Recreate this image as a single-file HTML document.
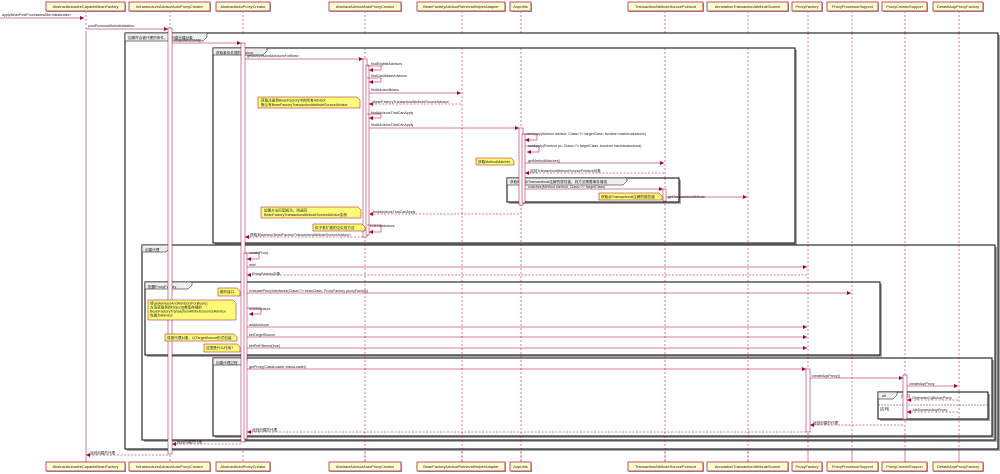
<!DOCTYPE html>
<html><head><meta charset="utf-8"><style>
html,body{margin:0;padding:0;background:#fff;width:1000px;height:474px;overflow:hidden}
svg{display:block}
text{font-family:"Liberation Sans","Noto Sans CJK SC",sans-serif;font-size:3.6px;fill:#222}
.pt text{font-size:3.9px}
.ll{stroke:#A80036;stroke-width:.5;stroke-dasharray:2,2}
.pb{fill:#FEFECE;stroke:#A80036;stroke-width:.7}
.m{stroke:#A80036;stroke-width:.5;fill:none}
.r{stroke:#A80036;stroke-width:.5;fill:none;stroke-dasharray:2,1.5}
.fl{fill:#eee;stroke:#000;stroke-width:.5}
.nt{fill:#FBFB77;stroke:#A80036;stroke-width:.5}
.act{fill:#fff;stroke:#A80036;stroke-width:.5}
.sh{fill:#aaa}
</style></head><body>
<svg width="1000" height="474" viewBox="0 0 1000 474" xmlns="http://www.w3.org/2000/svg">
<defs><marker id="a" markerWidth="4" markerHeight="4" refX="4" refY="2" orient="auto" markerUnits="userSpaceOnUse"><path d="M0,0 L4,2 L0,4 Z" fill="#A80036"/></marker></defs>
<g class="ll">
<line x1="86" y1="11" x2="86" y2="462"/><line x1="170" y1="11" x2="170" y2="462"/><line x1="243" y1="11" x2="243" y2="462"/><line x1="365" y1="11" x2="365" y2="462"/><line x1="462" y1="11" x2="462" y2="462"/><line x1="521" y1="11" x2="521" y2="462"/><line x1="665" y1="11" x2="665" y2="462"/><line x1="748" y1="11" x2="748" y2="462"/><line x1="808" y1="11" x2="808" y2="462"/><line x1="852" y1="11" x2="852" y2="462"/><line x1="905" y1="11" x2="905" y2="462"/><line x1="959" y1="11" x2="959" y2="462"/>
</g>
<rect x="127" y="35" width="873" height="416" class="sh"/>
<rect x="125" y="33" width="873" height="416" fill="#fff" stroke="#000" stroke-width="1"/>
<path d="M125,33 H207 V37 L203,41 H125 Z" class="fl"/><text x="128" y="39">如果符合被代理的条件，则创建代理对象</text>
<rect x="215" y="50" width="582" height="195" class="sh"/>
<rect x="213" y="48" width="582" height="195" fill="#fff" stroke="#000"/>
<path d="M213,48 H267 V51 L263,55 H213 Z" class="fl"/><text x="216" y="54">获取事务处理的Advisor</text>
<rect x="144" y="247" width="853" height="195" class="sh"/>
<rect x="142" y="245" width="853" height="195" fill="#fff" stroke="#000"/>
<path d="M142,245 H170 V248 L166,252 H142 Z" class="fl"/><text x="145" y="251">创建代理</text>
<rect x="147" y="284" width="735" height="73" class="sh"/>
<rect x="145" y="282" width="735" height="73" fill="#fff" stroke="#000"/>
<path d="M145,282 H192 V285 L188,289 H145 Z" class="fl"/><text x="148" y="288">配置ProxyFactory</text>
<rect x="215" y="360" width="779" height="78" class="sh"/>
<rect x="213" y="358" width="779" height="78" fill="#fff" stroke="#000"/>
<path d="M213,358 H247 V361 L243,365 H213 Z" class="fl"/><text x="216" y="364">创建代理过程</text>
<g class="ll">
<line x1="86" y1="33" x2="86" y2="462"/><line x1="365" y1="48" x2="365" y2="462"/><line x1="462" y1="48" x2="462" y2="462"/><line x1="521" y1="48" x2="521" y2="462"/><line x1="665" y1="48" x2="665" y2="462"/><line x1="748" y1="48" x2="748" y2="462"/><line x1="808" y1="33" x2="808" y2="462"/><line x1="852" y1="33" x2="852" y2="462"/><line x1="905" y1="33" x2="905" y2="462"/><line x1="959" y1="33" x2="959" y2="462"/>
</g>
<rect x="509" y="180" width="172" height="24" class="sh"/>
<rect x="507" y="178" width="172" height="24" fill="#fff" stroke="#000"/>
<path d="M507,178 H627 V181 L623,185 H507 Z" class="fl"/><text x="510" y="183">获取标注@Transactional注解的属性值，则方法需要事务增强</text>
<line x1="521" y1="178" x2="521" y2="202" class="ll"/><line x1="665" y1="178" x2="665" y2="202" class="ll"/>
<rect x="880" y="394" width="110" height="27" class="sh"/>
<rect x="878" y="392" width="110" height="27" fill="#fff" stroke="#000"/>
<path d="M878,392 H897 V395 L893,399 H878 Z" class="fl"/><text x="882" y="397">alt</text><text x="901" y="397">[条件]</text>
<line x1="878" y1="405" x2="988" y2="405" stroke="#000" stroke-width=".4" stroke-dasharray="2,1"/><text x="880" y="410">[否则]</text>
<line x1="959" y1="392" x2="959" y2="419" class="ll"/>
<rect x="168" y="28" width="4" height="426" class="act"/>
<rect x="241" y="43" width="4" height="399" class="act"/>
<rect x="244" y="253" width="3" height="186" class="act"/>
<rect x="363" y="59" width="4" height="178" class="act"/>
<rect x="366" y="65" width="3" height="170" class="act"/>
<rect x="519" y="128" width="4" height="77" class="act"/>
<rect x="522" y="134" width="3" height="69" class="act"/>
<rect x="663" y="189" width="3" height="12" class="act"/>
<rect x="806" y="369" width="4" height="63" class="act"/>
<rect x="903" y="375" width="4" height="44" class="act"/>
<g class="m" marker-end="url(#a)">
<line x1="0" y1="18" x2="84" y2="18"/>
<line x1="86" y1="29" x2="168" y2="29"/>
<line x1="172" y1="43" x2="241" y2="43"/>
<line x1="245" y1="59" x2="363" y2="59"/>
<path d="M367,66 H381 V70 H369"/>
<path d="M367,78 H381 V82 H369"/>
<line x1="369" y1="93" x2="461" y2="93"/>
<path d="M367,114 H381 V118 H369"/>
<line x1="369" y1="128" x2="519" y2="128"/>
<path d="M523,134 H537 V140 H525"/>
<path d="M525,146 H539 V152 H527"/>
<line x1="525" y1="163" x2="664" y2="163"/>
<line x1="525" y1="189" x2="663" y2="189"/>
<line x1="666" y1="197" x2="747" y2="197"/>
<path d="M367,225 H381 V232 H369"/>
<path d="M245,253 H259 V259 H247"/>
<line x1="247" y1="267" x2="807" y2="267"/>
<line x1="247" y1="293" x2="851" y2="293"/>
<path d="M247,308 H261 V314 H249"/>
<line x1="247" y1="327" x2="807" y2="327"/>
<line x1="247" y1="337" x2="807" y2="337"/>
<line x1="247" y1="348" x2="807" y2="348"/>
<line x1="247" y1="369" x2="806" y2="369"/>
<line x1="810" y1="378" x2="903" y2="378"/>
<line x1="907" y1="386" x2="958" y2="386"/>
</g>
<g class="r" marker-end="url(#a)">
<line x1="461" y1="104" x2="369" y2="104"/>
<line x1="664" y1="173" x2="525" y2="173"/>
<line x1="519" y1="214" x2="369" y2="214"/>
<line x1="363" y1="237" x2="245" y2="237"/>
<line x1="807" y1="275" x2="247" y2="275"/>
<line x1="958" y1="400" x2="907" y2="400"/>
<line x1="958" y1="412" x2="907" y2="412"/>
<line x1="903" y1="425" x2="810" y2="425"/>
<line x1="806" y1="432" x2="247" y2="432"/>
<line x1="241" y1="444" x2="172" y2="444"/>
<line x1="168" y1="455" x2="86" y2="455"/>
</g>
<g>
<text x="2" y="16">applyBeanPostProcessorsAfterInitialization</text>
<text x="88" y="27">postProcessAfterInitialization</text>
<text x="174" y="41">wrapIfNecessary</text>
<text x="247" y="57">getAdvicesAndAdvisorsForBean</text>
<text x="371" y="65">findEligibleAdvisors</text>
<text x="371" y="77">findCandidateAdvisors</text>
<text x="371" y="91">findAdvisorBeans</text>
<text x="373" y="103">BeanFactoryTransactionAttributeSourceAdvisor</text>
<text x="371" y="114">findAdvisorsThatCanApply</text>
<text x="371" y="126">findAdvisorsThatCanApply</text>
<text x="526" y="135">canApply(Advisor advisor, Class&lt;?&gt; targetClass, boolean hasIntroductions)</text>
<text x="528" y="147">canApply(Pointcut pc, Class&lt;?&gt; targetClass, boolean hasIntroductions)</text>
<text x="528" y="162">getMethodMatcher()</text>
<text x="530" y="172">返回TransactionAttributeSourcePointcut对象</text>
<text x="528" y="188">matches(Method method, Class&lt;?&gt; targetClass)</text>
<text x="668" y="198">getTransactionAttribute</text>
<text x="373" y="213">findAdvisorsThatCanApply</text>
<text x="370" y="227">extendAdvisors</text>
<text x="250" y="236">获取到advisor(BeanFactoryTransactionAttributeSourceAdvisor)</text>
<text x="249" y="254">createProxy</text>
<text x="249" y="266">new</text>
<text x="252" y="275">ProxyFactory对象</text>
<text x="249" y="292">evaluateProxyInterfaces(Class&lt;?&gt; beanClass, ProxyFactory proxyFactory)</text>
<text x="249" y="310">buildAdvisors</text>
<text x="249" y="326">addAdvisors</text>
<text x="249" y="336">setTargetSource</text>
<text x="249" y="347">setPreFiltered(true)</text>
<text x="249" y="368">getProxy(ClassLoader classLoader)</text>
<text x="812" y="377">createAopProxy()</text>
<text x="909" y="385">createAopProxy</text>
<text x="912" y="399">ObjenesisCglibAopProxy</text>
<text x="912" y="411">JdkDynamicAopProxy</text>
<text x="813" y="424">返回创建的代理</text>
<text x="252" y="431">返回创建的代理</text>
<text x="177" y="443">返回创建的代理</text>
<text x="90" y="454">返回创建的代理</text>
</g>
<path d="M258,97 H357 L360,100 V108 H258 Z" class="nt"/><text x="261" y="101.5">获取注册到BeanFactory中的所有Advisor</text><text x="261" y="106">默认有BeanFactoryTransactionAttributeSourceAdvisor</text>
<path d="M476,158 H511 L514,161 V165 H476 Z" class="nt"/><text x="478" y="163">获取MethodMatcher</text>
<path d="M599,193 H659 L662,196 V200 H599 Z" class="nt"/><text x="601" y="198">获取@Transactional注解的属性值</text>
<path d="M261,207 H358 L361,210 V218 H261 Z" class="nt"/><text x="264" y="211.5">如果方法匹配成功，则返回</text><text x="264" y="216">BeanFactoryTransactionAttributeSourceAdvisor实例</text>
<path d="M313,224 H362 L365,227 V231 H313 Z" class="nt"/><text x="315" y="229">供子类扩展的空实现方法</text>
<path d="M218,288 H237 L240,291 V296 H218 Z" class="nt"/><text x="220" y="293">额外接口</text>
<path d="M148,300 H233 L236,303 V320 H148 Z" class="nt"/><text x="150" y="304.5">将getAdvicesAndAdvisorsForBean()</text><text x="150" y="308.5">方法获取到的Object[]类型存储的</text><text x="150" y="312.5">BeanFactoryTransactionAttributeSourceAdvisor</text><text x="150" y="316.5">包装为Advisor</text>
<path d="M165,334 H234 L237,337 V341 H165 Z" class="nt"/><text x="167" y="339">将被代理对象，以TargetSource形式包装</text>
<path d="M204,344 H237 L240,347 V352 H204 Z" class="nt"/><text x="206" y="349">这里是什么作用?</text>
<g class="pt">
<rect x="47" y="3" width="79" height="9" class="sh"/><rect x="46" y="2" width="79" height="9" class="pb"/><text x="85.5" y="8.2" text-anchor="middle">AbstractAutowireCapableBeanFactory</text>
<rect x="130" y="3" width="81" height="9" class="sh"/><rect x="129" y="2" width="81" height="9" class="pb"/><text x="169.5" y="8.2" text-anchor="middle">InfrastructureAdvisorAutoProxyCreator</text>
<rect x="217" y="3" width="54" height="9" class="sh"/><rect x="216" y="2" width="54" height="9" class="pb"/><text x="243" y="8.2" text-anchor="middle">AbstractAutoProxyCreator</text>
<rect x="330" y="3" width="72" height="9" class="sh"/><rect x="329" y="2" width="72" height="9" class="pb"/><text x="365" y="8.2" text-anchor="middle">AbstractAdvisorAutoProxyCreator</text>
<rect x="418" y="3" width="88" height="9" class="sh"/><rect x="417" y="2" width="88" height="9" class="pb"/><text x="461" y="8.2" text-anchor="middle">BeanFactoryAdvisorRetrievalHelperAdapter</text>
<rect x="511" y="3" width="21" height="9" class="sh"/><rect x="510" y="2" width="21" height="9" class="pb"/><text x="520.5" y="8.2" text-anchor="middle">AopUtils</text>
<rect x="629" y="3" width="75" height="9" class="sh"/><rect x="628" y="2" width="75" height="9" class="pb"/><text x="665.5" y="8.2" text-anchor="middle">TransactionAttributeSourcePointcut</text>
<rect x="708" y="3" width="81" height="9" class="sh"/><rect x="707" y="2" width="81" height="9" class="pb"/><text x="747.5" y="8.2" text-anchor="middle">AnnotationTransactionAttributeSource</text>
<rect x="793" y="3" width="30" height="9" class="sh"/><rect x="792" y="2" width="30" height="9" class="pb"/><text x="807" y="8.2" text-anchor="middle">ProxyFactory</text>
<rect x="828" y="3" width="51" height="9" class="sh"/><rect x="827" y="2" width="51" height="9" class="pb"/><text x="852.5" y="8.2" text-anchor="middle">ProxyProcessorSupport</text>
<rect x="883" y="3" width="45" height="9" class="sh"/><rect x="882" y="2" width="45" height="9" class="pb"/><text x="904.5" y="8.2" text-anchor="middle">ProxyCreatorSupport</text>
<rect x="934" y="3" width="50" height="9" class="sh"/><rect x="933" y="2" width="50" height="9" class="pb"/><text x="958" y="8.2" text-anchor="middle">DefaultAopProxyFactory</text>
</g>
<g class="pt" transform="translate(0,460)">
<rect x="47" y="3" width="79" height="9" class="sh"/><rect x="46" y="2" width="79" height="9" class="pb"/><text x="85.5" y="8.2" text-anchor="middle">AbstractAutowireCapableBeanFactory</text>
<rect x="130" y="3" width="81" height="9" class="sh"/><rect x="129" y="2" width="81" height="9" class="pb"/><text x="169.5" y="8.2" text-anchor="middle">InfrastructureAdvisorAutoProxyCreator</text>
<rect x="217" y="3" width="54" height="9" class="sh"/><rect x="216" y="2" width="54" height="9" class="pb"/><text x="243" y="8.2" text-anchor="middle">AbstractAutoProxyCreator</text>
<rect x="330" y="3" width="72" height="9" class="sh"/><rect x="329" y="2" width="72" height="9" class="pb"/><text x="365" y="8.2" text-anchor="middle">AbstractAdvisorAutoProxyCreator</text>
<rect x="418" y="3" width="88" height="9" class="sh"/><rect x="417" y="2" width="88" height="9" class="pb"/><text x="461" y="8.2" text-anchor="middle">BeanFactoryAdvisorRetrievalHelperAdapter</text>
<rect x="511" y="3" width="21" height="9" class="sh"/><rect x="510" y="2" width="21" height="9" class="pb"/><text x="520.5" y="8.2" text-anchor="middle">AopUtils</text>
<rect x="629" y="3" width="75" height="9" class="sh"/><rect x="628" y="2" width="75" height="9" class="pb"/><text x="665.5" y="8.2" text-anchor="middle">TransactionAttributeSourcePointcut</text>
<rect x="708" y="3" width="81" height="9" class="sh"/><rect x="707" y="2" width="81" height="9" class="pb"/><text x="747.5" y="8.2" text-anchor="middle">AnnotationTransactionAttributeSource</text>
<rect x="793" y="3" width="30" height="9" class="sh"/><rect x="792" y="2" width="30" height="9" class="pb"/><text x="807" y="8.2" text-anchor="middle">ProxyFactory</text>
<rect x="828" y="3" width="51" height="9" class="sh"/><rect x="827" y="2" width="51" height="9" class="pb"/><text x="852.5" y="8.2" text-anchor="middle">ProxyProcessorSupport</text>
<rect x="883" y="3" width="45" height="9" class="sh"/><rect x="882" y="2" width="45" height="9" class="pb"/><text x="904.5" y="8.2" text-anchor="middle">ProxyCreatorSupport</text>
<rect x="934" y="3" width="50" height="9" class="sh"/><rect x="933" y="2" width="50" height="9" class="pb"/><text x="958" y="8.2" text-anchor="middle">DefaultAopProxyFactory</text>
</g>
</svg>
</body></html>
